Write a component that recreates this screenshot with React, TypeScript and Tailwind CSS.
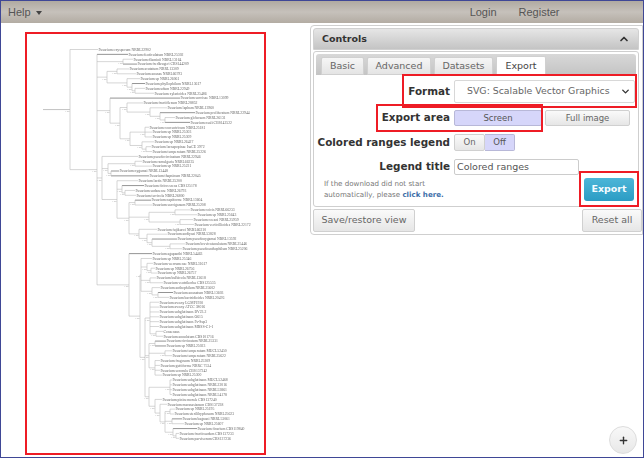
import { ReactElement } from 'react';
import { ChevronDown, ChevronUp, Plus } from 'lucide-react';

// tip x + label for each row of the tree, top to bottom
const leaves: [number, string][] = [
  [98, 'Fusarium oxysporum NRRL22902'],
  [128, 'Fusarium denticulatum NRRL25302'],
  [133, 'Fusarium dlaminii NRRL13164'],
  [137, 'Fusarium fredkrugeri CBS144209'],
  [129, 'Fusarium acutatum NRRL13309'],
  [136, 'Fusarium ananas NRRL66793'],
  [140, 'Fusarium sp NRRL26061'],
  [145, 'Fusarium phyllophilum NRRL13617'],
  [145, 'Fusarium udum NRRL22949'],
  [154, 'Fusarium xylarioides NRRL25486'],
  [180, 'Fusarium succisae NRRL13099'],
  [143, 'Fusarium fractiflexum NRRL28852'],
  [167, 'Fusarium lapham NRRL13960'],
  [195, 'Fusarium proliferatum NRRL22944'],
  [175, 'Fusarium globosum NRRL26131'],
  [190, 'Fusarium nsali CBS142522'],
  [149, 'Fusarium concentricum NRRL25181'],
  [152, 'Fusarium sp NRRL25303'],
  [152, 'Fusarium sp NRRL25309'],
  [154, 'Fusarium sp NRRL26427'],
  [151, 'Fusarium lacsapopinae IsaCE 3972'],
  [152, 'Fusarium temperatum NRRL25226'],
  [138, 'Fusarium pseudocircinatum NRRL22946'],
  [142, 'Fusarium ramulgaria NRRL66235'],
  [152, 'Fusarium sp NRRL25221'],
  [119, 'Fusarium nygamai NRRL13448'],
  [149, 'Fusarium thapsinum NRRL22045'],
  [138, 'Fusarium lactis NRRL25200'],
  [144, 'Fusarium ficicrescens CBS125178'],
  [135, 'Fusarium sudanense NRRL26793'],
  [136, 'Fusarium terricola NRRL26800'],
  [151, 'Fusarium napiforme NRRL13604'],
  [152, 'Fusarium sacciganum NRRL25208'],
  [190, 'Fusarium coicis NRRL66233'],
  [197, 'Fusarium sp NRRL25643'],
  [193, 'Fusarium coeani NRRL25959'],
  [194, 'Fusarium verticillioides NRRL22172'],
  [157, 'Fusarium fujikuroi NRRL66210'],
  [167, 'Fusarium andiyazi NRRL53828'],
  [177, 'Fusarium pseudonygamai NRRL13592'],
  [185, 'Fusarium brevicatenulatum NRRL25446'],
  [182, 'Fusarium pseudoanthophilum NRRL25206'],
  [152, 'Fusarium agapanthi NRRL54463'],
  [152, 'Fusarium sp NRRL25346'],
  [153, 'Fusarium werrumense NRRL31617'],
  [155, 'Fusarium sp NRRL26756'],
  [157, 'Fusarium sp NRRL26757'],
  [156, 'Fusarium bulbicola NRRL13618'],
  [163, 'Fusarium ventrikodae CBS125535'],
  [160, 'Fusarium anthophilum NRRL25602'],
  [173, 'Fusarium ananatum NRRL13603'],
  [169, 'Fusarium bactridioides NRRL20476'],
  [159, 'Fusarium awaxy LGMF1930'],
  [159, 'Fusarium awaxy ATCC 38016'],
  [159, 'Fusarium subglutinans BV23.2'],
  [159, 'Fusarium subglutinans O615'],
  [159, 'Fusarium subglutinans Fs-Sup3'],
  [159, 'Fusarium subglutinans MRSS-C1-1'],
  [163, 'Consensus'],
  [163, 'Fusarium annulatum CBS101716'],
  [166, 'Fusarium circinatum NRRL25331'],
  [166, 'Fusarium sp NRRL25023'],
  [172, 'Fusarium temperatum MUCL52450'],
  [172, 'Fusarium temperatum NRRL25622'],
  [160, 'Fusarium fragosum NRRL25309'],
  [160, 'Fusarium guttiforme NRRC 7534'],
  [160, 'Fusarium sororula CBS137242'],
  [162, 'Fusarium sp NRRL25300'],
  [172, 'Fusarium subglutinans MUCL52468'],
  [172, 'Fusarium subglutinans NRRL22016'],
  [172, 'Fusarium subglutinans NRRL53861'],
  [172, 'Fusarium subglutinans NRRL54178'],
  [162, 'Fusarium pininemorale CBS137240'],
  [167, 'Fusarium marasasianum CBS137238'],
  [175, 'Fusarium sp NRRL25195'],
  [174, 'Fusarium sterilihyphosum NRRL25623'],
  [182, 'Fusarium bagnani NRRL53061'],
  [184, 'Fusarium sp NRRL25607'],
  [197, 'Fusarium ficarium CBS119840'],
  [179, 'Fusarium fracticaudum CBS137233'],
  [179, 'Fusarium parvisorum CBS137236'],
];

const darkRows = [1, 3, 7, 10, 13, 15, 25, 26, 28, 31, 39, 42, 50, 60, 61, 76, 78];

type TreeNode = number | { x: number; c: TreeNode[] };
const n = (x: number, ...c: TreeNode[]): TreeNode => ({ x, c });

const tree = n(
  70,
  0,
  n(
    97,
    1,
    n(123, 2, 3),
    n(107, n(117, 4, 5), n(127, 6, n(132, 7, n(135, 8, 9)))),
    n(
      110,
      10,
      n(
        120,
        n(127, 11, n(150, 12, n(160, 13, n(165, 14, 15)))),
        n(130, n(145, 16, 17, 18), n(142, 19, n(146, 20, 21))),
      ),
    ),
    n(
      102,
      22,
      n(108, n(135, 23, 24), n(111, 25, 26)),
      n(
        117,
        27,
        n(122, 28, n(125, 29, 30)),
        n(
          129,
          n(135, 31, 32),
          n(149, n(175, 33, 34), n(180, 35, 36)),
          n(139, 37, n(147, 38, n(152, 39, n(170, 40, 41)))),
        ),
      ),
    ),
    n(
      129,
      42,
      n(
        140,
        n(141, 43, n(147, 44, n(151, 45, 46)), n(150, 47, 48), n(152, 49, n(158, 50, 51))),
        n(
          145,
          n(150, 52, 53, 54, 55, 56, 57, n(156, 58, 59)),
          n(149, n(155, 60, 61), n(165, 62, 63), n(155, 64, 65, 66, 67)),
          n(
            149,
            n(170, 68, 69, 70, 71),
            n(155, 72, n(160, 73, n(165, n(170, 74, 75), n(172, 76, 77), n(173, 78, n(176, 79, 80))))),
          ),
        ),
      ),
    ),
  ),
);

const rowY = (i: number) => 49.5 + i * 4.86;

// walks the tree, pushes lines + labels, returns the y of the node
function drawNode(node: TreeNode, parentX: number, out: ReactElement[]): number {
  if (typeof node === 'number') {
    const [tip, label] = leaves[node];
    const y = rowY(node);
    const dark = darkRows.includes(node);
    out.push(
      <line key={`l${node}`} x1={parentX} y1={y} x2={tip} y2={y} stroke={dark ? '#888' : '#bbb'} strokeWidth={dark ? 0.9 : 0.6} />,
      <text key={`t${node}`} x={tip + 0.5} y={y + 1.3} fontSize="3.75" fill="#666">
        {label}
      </text>,
    );
    return y;
  }
  const ys = node.c.map((child) => drawNode(child, node.x, out));
  const top = ys[0];
  const bottom = ys[ys.length - 1];
  const y = (top + bottom) / 2;
  out.push(
    <line key={`v${node.x}-${top}`} x1={node.x} y1={top} x2={node.x} y2={bottom} stroke="#bbb" strokeWidth="0.6" />,
    <line key={`h${node.x}-${top}`} x1={parentX} y1={y} x2={node.x} y2={y} stroke="#bbb" strokeWidth="0.6" />,
    <text key={`s${node.x}-${top}`} x={node.x - 5} y={y + 2.6} fontSize="2.6" fill="#aaa">
      1.00
    </text>,
  );
  return y;
}

function TreeSvg() {
  const out: ReactElement[] = [];
  const y = drawNode(tree, 43, out);
  return (
    <svg width="237" height="419" viewBox="27 34 237 419" fontFamily="'Liberation Serif', serif" className="blur-[0.35px]">
      <line x1="43" y1={y} x2="70" y2={y} stroke="#bbb" strokeWidth="0.6" />
      {out}
    </svg>
  );
}

const btn = 'flex items-center justify-center rounded-[2px] border border-[#d0d0d0] bg-gradient-to-b from-[#fafafa] to-[#e6e6e6] text-[#666]';
const fieldLabel = 'whitespace-nowrap text-right text-[10.4px] font-bold text-[#333]';

const App = () => {
  return (
    <div className="relative flex h-[458px] w-[644px] flex-col overflow-hidden border border-[#3f4796] bg-white font-['DejaVu_Sans',sans-serif]">
      {/* Navbar */}
      <div className="flex h-[22px] shrink-0 items-center bg-gradient-to-b from-[#b0aaa1] via-[#c6c1bb] to-[#b3aca3] font-['Liberation_Sans',sans-serif] text-[11px] text-[#555]">
        <div className="ml-[7px] flex items-center gap-[5px]">
          Help
          <span className="mt-[1px] border-x-[3.5px] border-t-[4px] border-x-transparent border-t-[#444]" />
        </div>
        <div className="ml-[428px]">Login</div>
        <div className="ml-[22px]">Register</div>
      </div>

      <div className="flex flex-1 items-start">
        {/* Tree */}
        <div className="ml-[24px] mt-[9px] h-[423px] w-[241px] shrink-0 border-2 border-[#ee1c25]">
          <TreeSvg />
        </div>

        {/* Controls */}
        <div className="ml-[44px] mt-[2px] flex h-[210px] flex-1 flex-col rounded-l-[4px] border border-[#cfcfcf] pl-[2px] pr-[3px] pt-[2px]">
          <div className="flex h-[22px] shrink-0 items-center justify-between rounded-t-[3px] border border-[#d0d0d0] bg-gradient-to-b from-[#e6e6e6] to-[#c4c4c4] px-[8px] text-[9.5px] font-bold text-[#333]">
            Controls
            <ChevronUp className="h-[12px] w-[12px]" strokeWidth={3.5} />
          </div>

          <div className="mt-[1px] flex h-[156px] shrink-0 flex-col rounded-[3px] border border-[#cfcfcf] p-[2px]">
            {/* Tabs */}
            <div className="flex h-[21px] shrink-0 items-end gap-[3px] rounded-t-[3px] bg-gradient-to-b from-[#d8d8d8] to-[#c4c4c4] pl-[5px] text-[9.5px] text-[#666]">
              <div className="flex h-[18px] w-[43px] items-center justify-center rounded-t-[2px] border border-[#d0d0d0] bg-gradient-to-b from-[#f6f6f6] to-[#e4e4e4]">Basic</div>
              <div className="flex h-[18px] w-[64px] items-center justify-center rounded-t-[2px] border border-[#d0d0d0] bg-gradient-to-b from-[#f6f6f6] to-[#e4e4e4]">Advanced</div>
              <div className="flex h-[18px] w-[59px] items-center justify-center rounded-t-[2px] border border-[#d0d0d0] bg-gradient-to-b from-[#f6f6f6] to-[#e4e4e4]">Datasets</div>
              <div className="flex h-[19px] w-[50px] items-center justify-center rounded-t-[2px] border border-b-0 border-[#d0d0d0] bg-white text-[#444]">Export</div>
            </div>

            {/* Form */}
            <div className="grid grid-cols-[134px_1fr] items-center gap-x-[4px] pt-[5px]">
              <div className={fieldLabel}>Format</div>
              <div className="flex h-[23px] w-[181px] items-center justify-between rounded-[2px] border border-[#d8d8d8] bg-white pl-[12px] pr-[3px] text-[9.4px] text-[#666]">
                SVG: Scalable Vector Graphics
                <ChevronDown className="h-[11px] w-[11px] text-[#333]" strokeWidth={3} />
              </div>

              <div className={`mt-[7px] ${fieldLabel}`}>Export area</div>
              <div className="mt-[7px] flex h-[16px] gap-[3px] text-[8.5px]">
                <div className="flex w-[88px] items-center justify-center rounded-[2px] border border-[#b8b8d8] bg-[#d6d6fa] text-[#555]">Screen</div>
                <div className={`${btn} w-[85px]`}>Full image</div>
              </div>

              <div className={`mt-[8px] ${fieldLabel}`}>Colored ranges legend</div>
              <div className="mt-[8px] flex h-[17px] text-[8.5px]">
                <div className={`${btn} w-[31px]`}>On</div>
                <div className="flex w-[30px] items-center justify-center rounded-r-[2px] border border-l-0 border-[#b8b8d8] bg-[#d6d6fa] text-[#555]">Off</div>
              </div>

              <div className={`mt-[8px] ${fieldLabel}`}>Legend title</div>
              <div className="mt-[8px] flex h-[16px] w-[125px] items-center rounded-[2px] border border-[#ccc] bg-white pl-[2px] text-[9.5px] text-[#555]">Colored ranges</div>
            </div>

            <div className="mt-[3px] flex items-start justify-between pl-[8px] pr-[2px]">
              <p className="mt-[1px] text-[7.1px] leading-[10.5px] text-[#777]">
                If the download did not start
                <br />
                automatically, please <span className="font-bold text-[#3d6ea8]">click here.</span>
              </p>
              <div className="flex h-[23px] w-[50px] items-center justify-center rounded-[3px] bg-gradient-to-b from-[#4cb6d8] to-[#2a9cc4] text-[9.5px] font-bold text-[#f4fbff]">Export</div>
            </div>
          </div>

          <div className="mt-[2px] flex justify-between pr-0 text-[9.5px]">
            <div className={`${btn} h-[23px] w-[102px]`}>Save/restore view</div>
            <div className={`${btn} -mr-[3px] h-[23px] w-[60px]`}>Reset all</div>
          </div>
        </div>
      </div>

      {/* Annotation boxes */}
      <div className="absolute left-[401px] top-[73px] h-[34px] w-[235px] border-2 border-[#ee1c25]" />
      <div className="absolute left-[375px] top-[103px] h-[28px] w-[167px] border-2 border-[#ee1c25]" />
      <div className="absolute left-[578px] top-[170px] h-[36px] w-[60px] border-2 border-[#ee1c25]" />

      {/* Add button */}
      <div className="absolute left-[608px] top-[425px] flex h-[28px] w-[28px] items-center justify-center rounded-full border border-[#ddd] bg-gradient-to-b from-[#f8f8f8] to-[#e8e8e8]">
        <Plus className="h-[11px] w-[11px] text-[#333]" strokeWidth={3} />
      </div>
    </div>
  );
};

export default App;
